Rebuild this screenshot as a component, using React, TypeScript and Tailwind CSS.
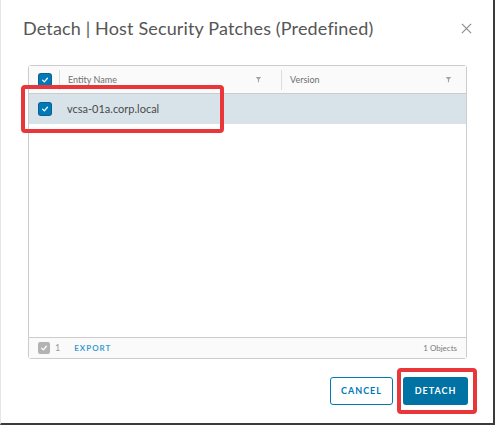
import React from 'react';

function Check({ gray = false }: { gray?: boolean }) {
  return (
    <span
      className={`flex items-center justify-center w-[12px] h-[12px] rounded-[2px] ${
        gray ? 'bg-[#b3b3b3]' : 'bg-[#0079b8] ring-1 ring-[#0b5f8f]'
      }`}
    >
      <svg width="8" height="8" viewBox="0 0 10 10">
        <path d="M2 5.2 L4.2 7.3 L8 2.8" fill="none" stroke="white" strokeWidth="1.6" strokeLinecap="round" strokeLinejoin="round" />
      </svg>
    </span>
  );
}

function Filter() {
  return (
    <svg width="7" height="7" viewBox="0 0 10 10">
      <path d="M1 1.5 H9 L5.8 5 V9 H4.2 V5 Z" fill="#a3a3a3" />
    </svg>
  );
}

export default function App() {
  return (
    <div className="relative w-[495px] h-[425px] bg-white border-l border-l-[#e6e6e6] border-r-2 border-r-[#3b3b3b] border-b-2 border-b-[#3b3b3b] font-['Lato',sans-serif] overflow-hidden">
      {/* Title */}
      <div className="flex items-center justify-between pl-[22px] pr-[21px] pt-[12px] h-[44px]">
        <h2 className="text-[18px] font-normal text-[#565656] tracking-[0.15px]">
          Detach | Host Security Patches (Predefined)
        </h2>
        <svg width="11" height="11" viewBox="0 0 12 12">
          <path d="M1 1 L11 11 M11 1 L1 11" stroke="#8c8c8c" strokeWidth="1.3" />
        </svg>
      </div>

      {/* Grid */}
      <div className="ml-[27px] mr-[26px] mt-[21px] h-[294px] border border-[#cccccc] rounded-[3px] flex flex-col">
        <div className="flex items-center h-[28px] bg-[#fafafa] border-b border-[#cccccc] text-[9px] text-[#6f6f6f]">
          <div className="w-[30px] flex justify-center pl-[2px]">
            <Check />
          </div>
          <div className="w-px h-[20px] bg-[#dddddd]" />
          <div className="w-[221px] flex items-center justify-between pl-[8px] pr-[19px]">
            <span>Entity Name</span>
            <Filter />
          </div>
          <div className="w-px h-[20px] bg-[#dddddd]" />
          <div className="flex-1 flex items-center justify-between pl-[8px] pr-[14px]">
            <span>Version</span>
            <Filter />
          </div>
        </div>
        <div className="flex items-center h-[30px] bg-[#d8e3e9] text-[11px] text-[#4a4a4a]">
          <div className="w-[30px] flex justify-center pl-[2px]">
            <Check />
          </div>
          <span className="pl-[8px]">vcsa-01a.corp.local</span>
        </div>
        <div className="flex-1" />
        <div className="flex items-center h-[21px] border-t border-[#cccccc] bg-[#fafafa] px-[9px] text-[8px]">
          <Check gray />
          <span className="ml-[5px] text-[#9a9a9a] text-[9px]">1</span>
          <span className="ml-[14px] font-bold tracking-[1px] text-[#3c9ad1]">EXPORT</span>
          <span className="ml-auto text-[#7a7a7a]">1 Objects</span>
        </div>
      </div>

      {/* Buttons */}
      <div className="flex justify-end gap-[10px] mr-[25px] mt-[18px]">
        <button className="w-[63px] h-[28px] border border-[#0079b8] rounded-[3px] text-[9px] font-bold tracking-[1px] text-[#0079b8] bg-white">
          CANCEL
        </button>
        <button className="w-[65px] h-[28px] rounded-[3px] text-[9px] font-bold tracking-[1px] text-white bg-[#0072a3]">
          DETACH
        </button>
      </div>

      {/* Annotation highlights */}
      <div className="absolute left-[20px] top-[85px] w-[203px] h-[48px] border-[4px] border-[#e8363a] rounded-[4px]" />
      <div className="absolute left-[396px] top-[368px] w-[80px] h-[46px] border-[4px] border-[#e8363a] rounded-[4px]" />
    </div>
  );
}
